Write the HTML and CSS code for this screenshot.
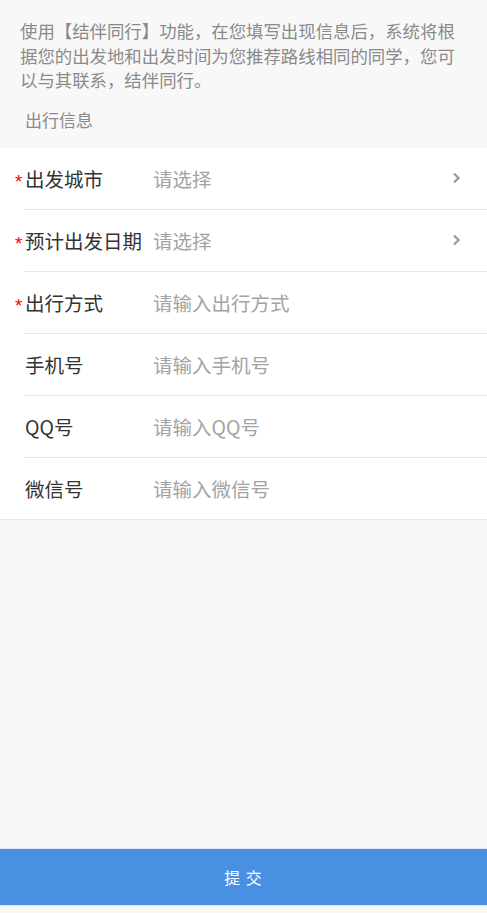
FILE: index.html
```html
<!DOCTYPE html>
<html lang="zh-CN">
<head>
<meta charset="utf-8">
<title>结伴同行</title>
<link rel="stylesheet" href="styles.css">
</head>
<body>
<div class="page">
  <p class="intro">使用【结伴同行】功能，在您填写出现信息后，系统将根据您的出发地和出发时间为您推荐路线相同的同学，您可以与其联系，结伴同行。</p>
  <div class="section-title">出行信息</div>
  <div class="form">
    <div class="row">
      <div class="label"><span class="star">*</span>出发城市</div>
      <div class="value">请选择</div>
      <svg class="chev" width="9" height="12" viewBox="0 0 9 12"><path d="M2 1.5 L6.5 6 L2 10.5" fill="none" stroke="#9a9a9a" stroke-width="2.2"/></svg>
    </div>
    <div class="row">
      <div class="label"><span class="star">*</span>预计出发日期</div>
      <div class="value">请选择</div>
      <svg class="chev" width="9" height="12" viewBox="0 0 9 12"><path d="M2 1.5 L6.5 6 L2 10.5" fill="none" stroke="#9a9a9a" stroke-width="2.2"/></svg>
    </div>
    <div class="row">
      <div class="label"><span class="star">*</span>出行方式</div>
      <div class="value">请输入出行方式</div>
    </div>
    <div class="row">
      <div class="label"><span class="star"></span>手机号</div>
      <div class="value">请输入手机号</div>
    </div>
    <div class="row">
      <div class="label"><span class="star"></span>QQ号</div>
      <div class="value">请输入QQ号</div>
    </div>
    <div class="row last">
      <div class="label"><span class="star"></span>微信号</div>
      <div class="value">请输入微信号</div>
    </div>
  </div>
  <div class="spacer"></div>
  <button class="submit">提 交</button>
  <div class="bottom"></div>
</div>
</body>
</html>
```

FILE: styles.css
```css
* { box-sizing: border-box; }
html, body {
  margin: 0;
  padding: 0;
  background: #f8f8f8;
}
body {
  font-family: "Noto Sans CJK SC", "Noto Sans", sans-serif;
}
.page {
  display: flex;
  flex-direction: column;
  height: 913px;
}
.intro {
  margin: 0;
  padding: 19px 20px 0 20px;
  font-size: 17.4px;
  line-height: 24.5px;
  color: #8a8a8a;
}
.section-title {
  padding: 15px 0 0 25px;
  font-size: 17px;
  line-height: 24px;
  color: #8a8a8a;
  margin-bottom: 16px;
}
.form {
  background: #fff;
  border-bottom: 1px solid #e6e6e6;
}
.row {
  margin-left: 25px;
  height: 62px;
  display: flex;
  align-items: center;
  padding-right: 26px;
  border-bottom: 1px solid #e6e6e6;
}
.row.last {
  border-bottom: none;
  height: 61px;
}
.label {
  width: 128px;
  display: flex;
  align-items: center;
  font-size: 19.5px;
  color: #333;
  white-space: nowrap;
}
.star {
  width: 10px;
  margin-left: -10px;
  color: #f00;
  font-family: "Liberation Sans", sans-serif;
  font-size: 19px;
  position: relative;
  top: 4px;
}
.value {
  flex: 1;
  font-size: 19.5px;
  color: #a3a3a3;
}
.chev {
  display: block;
}
.spacer {
  flex: 1;
}
.submit {
  display: block;
  width: 100%;
  height: 57px;
  border: none;
  border-top: 1px solid #dde6ef;
  background: #4a90e2;
  color: #fff;
  font-family: "Noto Sans CJK SC", sans-serif;
  font-size: 16px;
  letter-spacing: 1px;
  padding: 0;
}
.bottom {
  height: 8px;
  background: #f8f8f8;
  border-top: 1px solid #d6e4f5;
}
```
